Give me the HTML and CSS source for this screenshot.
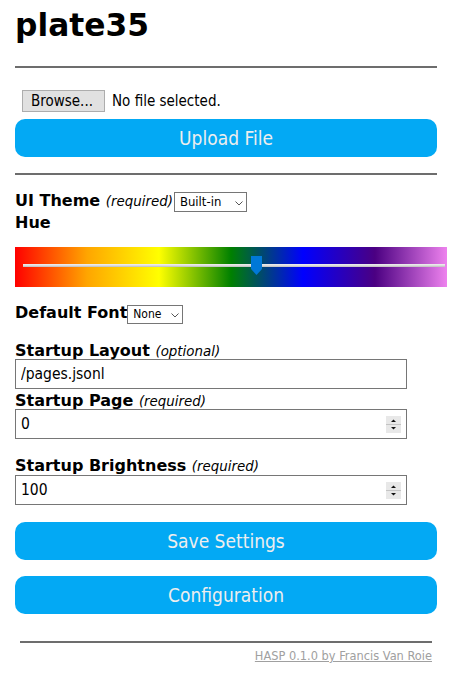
FILE: index.html
```html
<!DOCTYPE html>
<html lang="en">
<head>
<meta charset="utf-8">
<title>plate35</title>
<link rel="stylesheet" href="styles.css">
</head>
<body>
<div class="page">
  <h1 class="title">plate35</h1>
  <hr class="rule">
  <form class="upload">
    <div class="file-row">
      <button type="button" class="browse">Browse...</button><span class="file-name">No file selected.</span>
    </div>
    <button type="button" class="btn">Upload File</button>
  </form>
  <hr class="rule rule-2">
  <form class="settings">
    <div class="inline-row theme-row">
      <label class="lbl">UI Theme <em class="hint">(required)</em></label><span class="select-wrap sw-theme"><select class="sel sel-theme"><option>Built-in</option></select><svg class="chev" width="8" height="5" viewBox="0 0 8 5"><path d="M0.5 0.5 L4 4 L7.5 0.5" fill="none" stroke="#555" stroke-width="1"/></svg></span>
    </div>
    <div class="lbl hue-lbl">Hue</div>
    <div class="hue-bar">
      <div class="track"></div>
      <svg class="thumb" style="left:236px" width="11" height="19" viewBox="0 0 11 19"><path d="M0 0 H11 V13 L5.5 19 L0 13 Z" fill="#0078d7"/></svg>
    </div>
    <div class="inline-row font-row">
      <label class="lbl">Default Font</label><span class="select-wrap sw-font"><select class="sel sel-font"><option>None</option></select><svg class="chev" width="8" height="5" viewBox="0 0 8 5"><path d="M0.5 0.5 L4 4 L7.5 0.5" fill="none" stroke="#555" stroke-width="1"/></svg></span>
    </div>
    <label class="lbl field-lbl lbl-layout">Startup Layout <em class="hint">(optional)</em></label>
    <div class="field"><input class="field-input" type="text" value="/pages.jsonl"></div>
    <label class="lbl field-lbl lbl-page">Startup Page <em class="hint">(required)</em></label>
    <div class="field"><input class="field-input" type="text" value="0"><svg class="spin" width="15" height="17" viewBox="0 0 15 17"><rect width="15" height="17" fill="#e8e8e8"/><rect x="0" y="8" width="15" height="1" fill="#c4c4c4"/><path d="M5 6 H10 L7.5 3.5 Z" fill="#111"/><path d="M5 11 H10 L7.5 13.5 Z" fill="#111"/></svg></div>
    <label class="lbl field-lbl lbl-bright">Startup Brightness <em class="hint">(required)</em></label>
    <div class="field field-bright"><input class="field-input" type="text" value="100"><svg class="spin" width="15" height="17" viewBox="0 0 15 17"><rect width="15" height="17" fill="#e8e8e8"/><rect x="0" y="8" width="15" height="1" fill="#c4c4c4"/><path d="M5 6 H10 L7.5 3.5 Z" fill="#111"/><path d="M5 11 H10 L7.5 13.5 Z" fill="#111"/></svg></div>
    <button type="button" class="btn btn-save">Save Settings</button>
  </form>
  <button type="button" class="btn btn-config">Configuration</button>
  <div class="footer">
    <hr class="rule rule-foot">
    <div class="credit"><a class="credit-link" href="#">HASP 0.1.0 by Francis Van Roie</a></div>
  </div>
</div>
</body>
</html>
```

FILE: styles.css
```css
* { box-sizing: border-box; }
body {
  margin: 0;
  background: #fff;
  color: #000;
  font-family: "DejaVu Sans", Verdana, sans-serif;
}
.page {
  width: 422px;
  margin-left: 15px;
}
.title {
  margin: 0 0 23px;
  padding-top: 7px;
  font: 700 31.3px/36px "DejaVu Sans", sans-serif;
  height: 43px;
}
.rule {
  margin: 0;
  border: 0;
  border-top: 2px solid #6d6d6d;
  height: 0;
}
.upload { margin: 22px 0 0; }
.file-row {
  display: flex;
  align-items: center;
  height: 22px;
  padding-left: 7px;
}
.browse {
  width: 83px;
  height: 22px;
  padding: 1px 0 0 8px;
  text-align: left;
  border: 1px solid #adadad;
  background: #e1e1e1;
  color: #000;
  font: 15px/19px "DejaVu Sans Condensed", sans-serif;
}
.file-name {
  margin-left: 7px;
  padding-top: 1px;
  font: 15px/21px "DejaVu Sans Condensed", sans-serif;
}
.btn {
  display: block;
  width: 100%;
  height: 38px;
  margin-top: 7px;
  padding: 1px 0 0;
  border: 0;
  border-radius: 10px;
  background: #03a9f4;
  color: #eee;
  font: 19px/37px "DejaVu Sans Condensed", sans-serif;
}
.rule-2 { margin-top: 16px; }
.settings { margin: 0; }
.inline-row {
  display: flex;
  align-items: flex-start;
}
.theme-row {
  margin-top: 17px;
  height: 20px;
}
.lbl {
  height: 18px;
  font: 700 16px/18px "DejaVu Sans", sans-serif;
  white-space: nowrap;
}
.hint {
  font: italic 400 13.4px/16px "DejaVu Sans", sans-serif;
}
.select-wrap {
  position: relative;
  display: inline-block;
  margin-left: 1px;
}
.sel {
  -webkit-appearance: none;
  appearance: none;
  display: block;
  margin: 0;
  border: 1px solid #767676;
  border-radius: 0;
  background: #fff;
  color: #000;
  font-family: "DejaVu Sans Condensed", sans-serif;
}
.sel-theme {
  width: 73px;
  height: 20px;
  padding: 0 0 0 5px;
  font-size: 13px;
  line-height: 18px;
}
.sw-theme .chev { position: absolute; left: 61px; top: 9px; }
.sel-font {
  width: 56px;
  height: 19px;
  padding: 0 0 0 5px;
  font-size: 12px;
  line-height: 17px;
}
.sw-font { margin-top: 1px; margin-left: 0; }
.sw-font .chev { position: absolute; left: 44px; top: 8px; }
.hue-lbl {
  display: block;
  height: 19px;
  margin-top: 1px;
  line-height: 19px;
}
.hue-bar {
  position: relative;
  display: flex;
  align-items: center;
  width: 432px;
  height: 40px;
  margin-top: 15px;
  padding: 0 2px 3px 8px;
  background: linear-gradient(to right, red, orange, yellow, green, blue, indigo, violet);
}
.track {
  flex: 1;
  height: 3px;
  background: #dcdcdc;
  border-top: 1px solid #e9e9e9;
  border-bottom: 1px solid #c8c8c8;
}
.thumb {
  position: absolute;
  top: 9px;
}
.font-row {
  margin-top: 17px;
  height: 20px;
}
.field-lbl {
  display: block;
  height: 16px;
  line-height: 16px;
  overflow: visible;
}
.lbl-layout { margin-top: 19px; }
.lbl-page { margin-top: 4px; }
.lbl-bright { margin-top: 19px; }
.field {
  display: flex;
  align-items: center;
  width: 392px;
  height: 30px;
  border: 1px solid #767676;
  background: #fff;
}
.field-bright { margin-top: 1px; }
.field-input {
  flex: 1;
  min-width: 0;
  height: 28px;
  margin: 0;
  padding: 0 0 0 5px;
  border: 0;
  outline: none;
  background: transparent;
  color: #000;
  font: 15.5px/28px "DejaVu Sans Condensed", sans-serif;
}
.spin {
  flex: none;
  margin-right: 5px;
}
.btn-save { margin-top: 17px; }
.btn-config { margin-top: 16px; }
.footer {
  padding: 0 5px;
}
.rule-foot { margin-top: 27px; }
.credit {
  margin-top: 7px;
  text-align: right;
  font: 11.4px/13px "DejaVu Sans", sans-serif;
}
.credit-link {
  color: #a0a0a0;
  text-decoration: underline;
}
```
